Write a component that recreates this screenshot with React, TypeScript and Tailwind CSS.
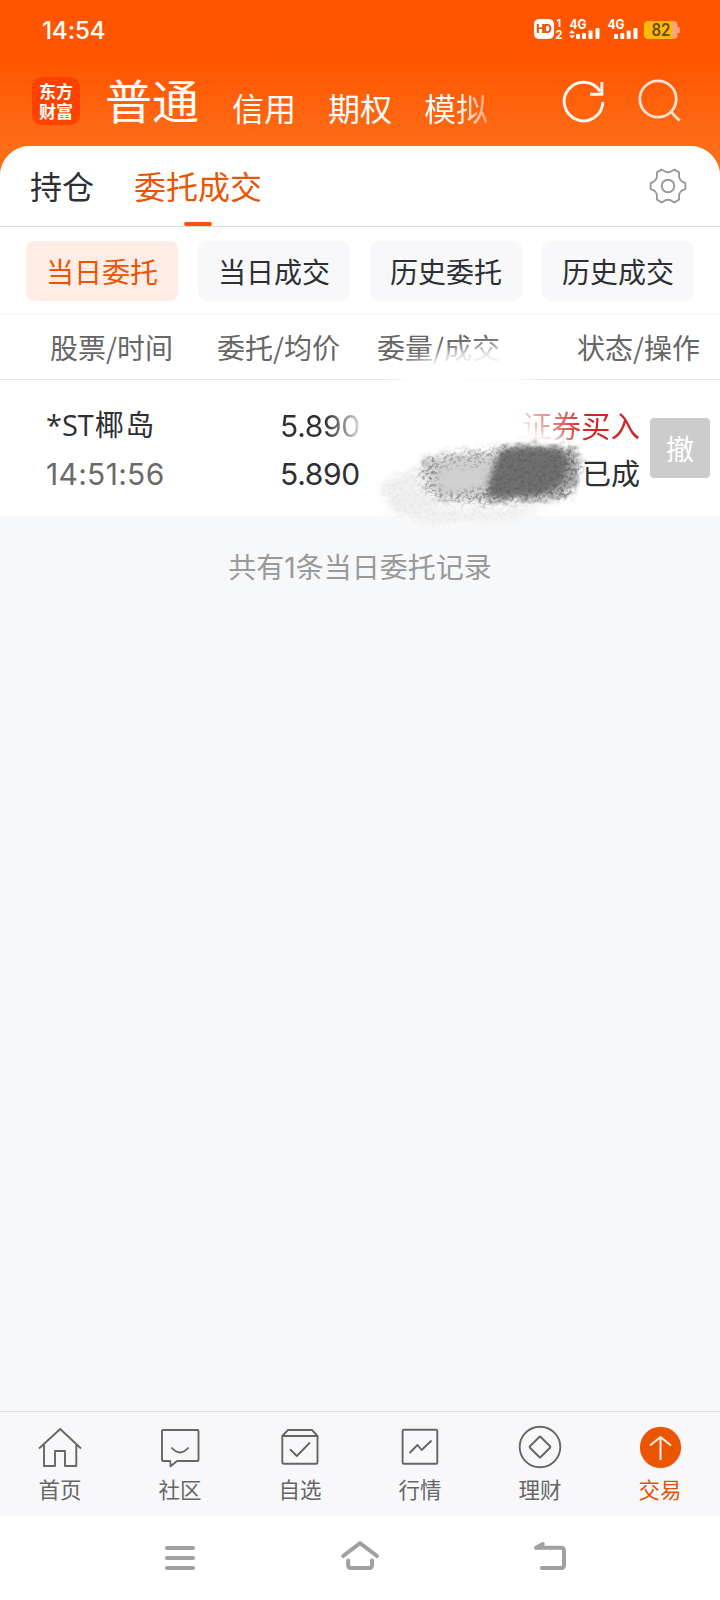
import React from "react";

const CJK = "font-['Noto_Sans_CJK_SC',sans-serif]";
const MIX = "font-['Inter','Noto_Sans_CJK_SC',sans-serif]";

function polar(deg: number, r: number) {
  const a = (deg * Math.PI) / 180;
  return `${(20 + r * Math.cos(a)).toFixed(2)} ${(20 + r * Math.sin(a)).toFixed(2)}`;
}

const gearPath =
  [0, 60, 120, 180, 240, 300]
    .map((t, i) => `${i === 0 ? "M" : "L"}${polar(t - 9, 17.6)} L${polar(t + 9, 17.6)} C${polar(t + 17, 15.6)} ${polar(t + 20, 13.3)} ${polar(t + 30, 13.8)} C${polar(t + 40, 13.3)} ${polar(t + 43, 15.6)} ${polar(t + 51, 17.6)}`)
    .join(" ") + "Z";

function StatusIcons() {
  return (
    <svg width="150" height="28" viewBox="532 14 150 28" fontFamily="Inter, sans-serif">
      <rect x="534" y="18" width="20" height="20" rx="5" fill="#fff" />
      <text x="544" y="32" fontSize="11.5" fontWeight="800" fill="#d9580f" textAnchor="middle" textLength="15.5">HD</text>
      <text x="556.5" y="26" fontSize="10.5" fontWeight="700" fill="#fff">1</text>
      <text x="555.3" y="37.7" fontSize="11.5" fontWeight="700" fill="#fff">2</text>
      <g fill="#fff">
        <text x="569.5" y="28" fontSize="13.5" fontWeight="700" textLength="17" lengthAdjust="spacingAndGlyphs">4G</text>
        <path d="M569 32.3 L572 29 L575 32.3Z M569 34.2 L572 37.5 L575 34.2Z" />
        <rect x="576" y="33" width="4" height="5" rx="1" />
        <rect x="582" y="32" width="4" height="6" rx="1" />
        <rect x="588.5" y="29.5" width="4" height="8.5" rx="1" />
        <rect x="595.5" y="27" width="4" height="11" rx="1" />
        <text x="607.5" y="28" fontSize="13.5" fontWeight="700" textLength="17" lengthAdjust="spacingAndGlyphs">4G</text>
        <rect x="614" y="33" width="4" height="5" rx="1" />
        <rect x="620.3" y="32" width="4" height="6" rx="1" />
        <rect x="626.7" y="29.5" width="4" height="8.5" rx="1" />
        <rect x="633.5" y="27" width="4" height="11" rx="1" />
      </g>
      <path d="M649 20 H673 Q677.5 20 677.5 24 V26 H679.8 V32 H677.5 V34 Q677.5 38 673 38 H649 Q644 38 644 33 V25 Q644 20 649 20Z" fill="#ffa37c" />
      <path d="M649 20 H672 V38 H649 Q644 38 644 33 V25 Q644 20 649 20Z" fill="#fdb80f" />
      <text x="661" y="35.3" fontSize="17" fontWeight="600" fill="#6b4a08" textAnchor="middle" textLength="19" lengthAdjust="spacingAndGlyphs">82</text>
    </svg>
  );
}

function Header() {
  return (
    <header className="h-[186px] shrink-0 bg-[linear-gradient(to_bottom,#ff5500_0px,#ff5500_60px,#ff6d17_146px)] text-white">
      <div className="flex h-[58px] items-center justify-between pl-[42px] pr-[38px]">
        <span className={`pt-0.5 text-[24.5px] font-medium tracking-[-0.3px] ${MIX}`}>14:54</span>
        <StatusIcons />
      </div>
      <div className="flex h-[88px] pl-8 pr-9">
        <div className="mt-[19px] flex h-12 w-12 flex-col items-center justify-center rounded-[10px] bg-[#ff4200] font-['Noto_Sans_CJK_SC',sans-serif] text-[17px] font-bold leading-[20px]">
          <span>东方</span>
          <span>财富</span>
        </div>
        <div className={`flex pl-[25px] ${CJK}`}>
          <span className="w-[127px] pt-[9px] text-[47px] leading-[64px]">普通</span>
          <div className="flex gap-8 pt-[25px] text-[32px] leading-[48px]">
            <span>信用</span>
            <span>期权</span>
            <span className="bg-[linear-gradient(to_right,#fff_32px,#ffffffcc_45px,#ffffff66_64px)] bg-clip-text text-transparent">模拟</span>
          </div>
        </div>
        <div className="ml-auto flex gap-[28px] pt-[18px]">
          <svg width="48" height="48" viewBox="560 76 48 48" fill="none" stroke="#fffaf2" strokeWidth="2.9">
            <path d="M602.8 102 A19.3 19.3 0 1 1 600 91.5" />
            <path d="M601.9 82 V94.2 H590" />
          </svg>
          <svg width="48" height="48" viewBox="636 76 48 48" fill="none" stroke="#ffe3d0" strokeWidth="2.8">
            <circle cx="658" cy="99" r="18.2" />
            <path d="M670.5 111.5 L679.7 120.7" />
          </svg>
        </div>
      </div>
    </header>
  );
}

function Tabs() {
  return (
    <div className={`flex h-[81px] items-start border-b border-[#dcdcdc] bg-white pl-[30px] pr-8 text-[32px] ${CJK}`}>
      <span className="pt-[15px] leading-[48px] text-[#2d2f33]">持仓</span>
      <div className="ml-[40px] flex h-[80px] flex-col items-center justify-between text-[#ea5504]">
        <span className="pt-[15px] leading-[48px]">委托成交</span>
        <i className="h-1 w-7 rounded-[2px] bg-[#ff5208]" />
      </div>
      <svg className="ml-auto mt-5" width="40" height="40" viewBox="0 0 40 40" fill="none" stroke="#999" strokeWidth="1.9" strokeLinejoin="round">
        <path d={gearPath} />
        <circle cx="20" cy="20" r="6.3" />
      </svg>
    </div>
  );
}

function Filters() {
  const items = ["当日委托", "当日成交", "历史委托", "历史成交"];
  return (
    <div className={`flex h-[88px] gap-5 border-b border-[#f6f6f7] px-[26px] pt-[14px] text-[28px] ${CJK}`}>
      {items.map((label, i) => (
        <button key={label} className={`h-[60px] w-[152px] rounded-lg leading-[60px] ${i === 0 ? "bg-[#ffede5] text-[#ea5504]" : "bg-[#f8f8fa] text-[#2d2f33]"}`}>
          {label}
        </button>
      ))}
    </div>
  );
}

function Smudge() {
  return (
    <svg className="pointer-events-none absolute left-[340px] top-[20px]" width="260" height="200" viewBox="340 335 260 200">
      <defs>
        <filter id="rough" x="-20%" y="-30%" width="140%" height="160%" colorInterpolationFilters="sRGB">
          <feGaussianBlur in="SourceGraphic" stdDeviation="2.5" result="b" />
          <feTurbulence type="fractalNoise" baseFrequency="0.1 0.28" numOctaves="3" seed="5" result="n" />
          <feDisplacementMap in="b" in2="n" scale="20" xChannelSelector="R" yChannelSelector="A" result="d" />
          <feGaussianBlur in="d" stdDeviation="0.8" />
        </filter>
        <filter id="grain" x="-20%" y="-30%" width="140%" height="160%" colorInterpolationFilters="sRGB">
          <feGaussianBlur in="SourceGraphic" stdDeviation="3.5" result="b" />
          <feTurbulence type="fractalNoise" baseFrequency="0.28 0.32" numOctaves="4" seed="9" result="n" />
          <feColorMatrix in="n" type="matrix" values="0 0 0 0 0  0 0 0 0 0  0 0 0 0 0  6 0 0 0 -2.9" result="m" />
          <feComposite in="b" in2="m" operator="in" result="c" />
          <feGaussianBlur in="c" stdDeviation="0.6" />
        </filter>
        <filter id="soft" x="-40%" y="-60%" width="180%" height="220%">
          <feGaussianBlur stdDeviation="6" />
        </filter>
        <filter id="softer" x="-20%" y="-30%" width="140%" height="160%">
          <feGaussianBlur stdDeviation="2.5" />
        </filter>
      </defs>
      <path d="M400 368 Q450 345 508 346 L530 385 L395 388Z" fill="#fff" fillOpacity="0.9" filter="url(#soft)" />
      <path d="M410 400 L510 404 L530 428 L574 442 L550 450 L420 450Z" fill="#fff" filter="url(#soft)" />
      <path d="M378 486 L410 472 L580 480 L560 506 L512 520 L470 526 L410 525 L384 512Z" fill="#fcfcfc" filter="url(#rough)" />
      <path d="M380 484 L418 466 L430 490 L440 510 L540 508 L510 520 L430 524 L395 514Z" fill="#f1f1f1" filter="url(#rough)" />
      <path d="M380 486 L418 470 L436 508 L540 506 L510 520 L430 524 L395 514Z" fill="#e4e4e4" fillOpacity="0.6" filter="url(#grain)" />
      <path d="M422 459 L450 454 L504 449 L490 502 L440 500 L426 486Z" fill="#d0d0d0" filter="url(#rough)" />
      <path d="M424 461 L436 454 L440 470 L434 484 L446 494 L490 487 L488 503 L436 500 L420 478Z" fill="#777" fillOpacity="0.75" filter="url(#grain)" />
      <path d="M440 453 L500 448 L500 466 L440 468Z" fill="#8a8a8a" fillOpacity="0.6" filter="url(#grain)" />
      <path d="M502 449 L524 444 L570 448 L580 460 L576 484 L560 498 L484 502 L490 478Z" fill="#a0a0a0" filter="url(#rough)" />
      <path d="M501 451 L524 448 L560 450 L568 462 L562 482 L542 494 L488 497 L491 478Z" fill="#707070" filter="url(#softer)" />
      <path d="M500 447 L574 447 L582 466 L570 498 L482 503 L490 480Z" fill="#606060" fillOpacity="0.7" filter="url(#grain)" />
    </svg>
  );
}

function Orders() {
  return (
    <div className="relative">
      <div className={`flex h-[65px] items-center border-b border-[#e8e8e9] text-[28px] text-[#666] ${CJK}`}>
        <span className="ml-[50px] w-[167px] shrink-0">股票/时间</span>
        <span className="w-[160px] shrink-0">委托/均价</span>
        <span className="w-[200px] shrink-0">委量/成交</span>
        <span className="shrink-0">状态/操作</span>
      </div>
      <div className={`flex h-[136px] bg-white pt-[20px] text-[30px] leading-[48px] text-[#2d2f33] ${MIX}`}>
        <div className="ml-[46px] flex w-[234px] shrink-0 flex-col">
          <span className="pt-px text-[29px] font-['Open_Sans','Noto_Sans_CJK_SC',sans-serif]">*ST<span className="ml-px tracking-[1.5px]">椰岛</span></span>
          <span className="pt-px tracking-[0.3px] text-[#6a6a6a]">14:51:56</span>
        </div>
        <div className="flex w-[84px] shrink-0 flex-col pt-[2px] tracking-[-0.3px]">
          <span className="bg-[linear-gradient(to_right,#2d2f33_45px,#77777a_60px,#d8d8d8_80px)] bg-clip-text text-transparent">5.890</span>
          <span>5.890</span>
        </div>
        <div className="flex flex-1 flex-col items-end font-['Noto_Sans_CJK_SC',sans-serif] text-[29.5px]">
          <span className="bg-[linear-gradient(to_right,#f3caca_0px,#e88b8b_26px,#d84d4d_50px,#cf2525_65px)] bg-clip-text text-transparent">证券买入</span>
          <span className="text-[29px]">已成</span>
        </div>
        <button className="ml-[10px] mr-[10px] mt-[18px] h-[60px] w-[60px] shrink-0 rounded bg-[#ccc] font-['Noto_Sans_CJK_SC',sans-serif] text-[28px] leading-[60px] text-white">撤</button>
      </div>
      <Smudge />
    </div>
  );
}

const navItems: { label: string; box: string; icon: React.ReactNode }[] = [
  {
    label: "首页",
    box: "36 1423 48 48",
    icon: <path d="M39 1448.5 L60.2 1429 L81 1448.5 M44 1445 V1466 H55 V1451 H65 V1466 H76.3 V1445" />,
  },
  {
    label: "社区",
    box: "156 1423 48 48",
    icon: <path d="M163 1430 H197.5 Q198.5 1430 198.5 1431 V1460 Q198.5 1461 197.5 1461 H177 L170.6 1466.3 L170.2 1461 H163 Q162 1461 162 1460 V1431 Q162 1430 163 1430Z M171.5 1447.5 Q180 1457.5 188.5 1447.5" />,
  },
  {
    label: "自选",
    box: "276 1423 48 48",
    icon: <path d="M282.3 1436 H317.5 V1462 Q317.5 1463.7 316 1463.7 H284 Q282.3 1463.7 282.3 1462Z M282.3 1436 L288 1430 H312 L317.5 1436 M290 1449.3 L296.8 1456 L310 1442.5" />,
  },
  {
    label: "行情",
    box: "396 1423 48 48",
    icon: <path d="M404 1429.8 H436 Q437.3 1429.8 437.3 1431 V1462.5 Q437.3 1463.8 436 1463.8 H404 Q402.6 1463.8 402.6 1462.5 V1431 Q402.6 1429.8 404 1429.8Z M409.5 1453 L417.5 1445 L421.7 1450 L431.5 1440.5" />,
  },
  {
    label: "理财",
    box: "516 1423 48 48",
    icon: (
      <>
        <circle cx="540" cy="1447" r="20.3" />
        <rect x="532.4" y="1439.4" width="15.2" height="15.2" rx="1" transform="rotate(45 540 1447)" />
      </>
    ),
  },
  {
    label: "交易",
    box: "636 1423 48 48",
    icon: (
      <>
        <circle cx="660.5" cy="1447.4" r="20.6" fill="#ec5500" stroke="none" />
        <path d="M660.5 1437 V1460 M650 1445.5 L660.5 1437 L671 1445.5" stroke="#fff1e6" strokeWidth="2" />
      </>
    ),
  },
];

function BottomNav() {
  return (
    <nav className={`grid h-[105px] shrink-0 grid-cols-6 border-t border-[#e0e1e3] bg-[#f8f8fa] text-[21.5px] text-[#666] ${CJK}`}>
      {navItems.map((n, i) => (
        <div key={n.label} className={`flex flex-col items-center pt-[11px] ${i === 5 ? "text-[#e35205]" : ""}`}>
          <svg width="48" height="48" viewBox={n.box} fill="none" stroke="#666" strokeWidth="1.9" strokeLinejoin="round">
            {n.icon}
          </svg>
          <span className="mt-[2px] leading-8">{n.label}</span>
        </div>
      ))}
    </nav>
  );
}

function SystemNav() {
  return (
    <div className="flex h-[84px] shrink-0 items-center justify-between bg-white pl-[156px] pr-[146px]">
      <svg width="48" height="48" viewBox="156 1534 48 48" fill="none" stroke="#a0a0a0" strokeWidth="4" strokeLinecap="round">
        <path d="M167 1548 H193 M167 1558 H193 M167 1568 H193" />
      </svg>
      <svg width="58" height="48" viewBox="331 1534 58 48" fill="none" stroke="#a0a0a0" strokeWidth="4" strokeLinecap="round" strokeLinejoin="round">
        <path d="M343.2 1556 L360 1543.2 L377 1556 M348.2 1560.5 V1565 Q348.2 1568 351 1568 H369 Q372 1568 372 1565 V1560.5" />
      </svg>
      <svg width="58" height="48" viewBox="516 1534 58 48" fill="none" stroke="#a0a0a0" strokeWidth="4" strokeLinecap="round" strokeLinejoin="round">
        <path d="M542.8 1544 L536 1547.8 H561 Q564 1547.8 564 1551 V1565 Q564 1568 561 1568 H542" />
      </svg>
    </div>
  );
}

export default function App() {
  return (
    <div className="flex h-[1600px] w-[720px] flex-col overflow-hidden bg-[#f7f8fa]">
      <Header />
      <main className="-mt-[40px] flex-1">
        <div className="overflow-hidden rounded-t-[30px] bg-white">
          <Tabs />
          <Filters />
        </div>
        <div className="bg-white">
          <Orders />
        </div>
        <p className={`pt-[31px] text-center text-[28px] leading-[42px] text-[#999] ${MIX}`}>共有1条当日委托记录</p>
      </main>
      <BottomNav />
      <SystemNav />
    </div>
  );
}
